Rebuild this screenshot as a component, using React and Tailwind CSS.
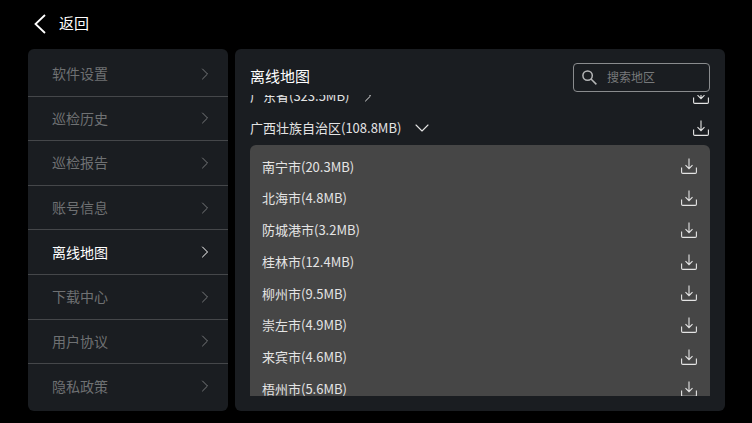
import { ChevronRight, ChevronDown } from 'lucide-react'

const MENU = ['软件设置', '巡检历史', '巡检报告', '账号信息', '离线地图', '下载中心', '用户协议', '隐私政策']
const CITIES = [
  '南宁市(20.3MB)',
  '北海市(4.8MB)',
  '防城港市(3.2MB)',
  '桂林市(12.4MB)',
  '柳州市(9.5MB)',
  '崇左市(4.9MB)',
  '来宾市(4.6MB)',
  '梧州市(5.6MB)',
]

const DownloadIcon = () => (
  <svg width="16" height="16" viewBox="0 0 16 16" fill="none" stroke="#e4e4e4" strokeWidth="1.1" className="shrink-0">
    <path d="M8 0.5V10.5M4.5 7.2L8 10.7L11.5 7.2" />
    <path d="M0.6 9.5V14.2Q0.6 15.4 1.8 15.4H14.2Q15.4 15.4 15.4 14.2V9.5" />
  </svg>
)

const App = () => {
  return (
    <div className="w-[752px] h-[423px] bg-black overflow-hidden text-white font-['Noto_Sans_CJK_SC','Noto_Sans',sans-serif]">
      <div className="h-[49px] flex items-center pl-[34px] pb-[2px]">
        <svg width="12" height="20" viewBox="0 0 12 20" fill="none" stroke="white" strokeWidth="1.8">
          <path d="M11 1L1.5 10L11 19" />
        </svg>
        <span className="ml-[13px] text-[15px]">返回</span>
      </div>

      <div className="flex gap-[7px] pl-[28px]">
        {/* Sidebar */}
        <div className="w-[200px] h-[362px] bg-[#1a1d21] rounded-[6px] pt-[3px] flex flex-col overflow-hidden">
          {MENU.map((item, i) => (
            <div
              key={item}
              className={`h-[44.6px] shrink-0 flex items-center justify-between pl-[24px] pr-[13px] ${i < 7 ? 'border-b border-[#45474a]' : ''}`}
            >
              <span className={`text-[14px] ${item === '离线地图' ? 'text-white' : 'text-[#6f7173]'}`}>{item}</span>
              <ChevronRight size={20} strokeWidth={1.2} className={item === '离线地图' ? 'text-white' : 'text-[#77797b]'} />
            </div>
          ))}
        </div>

        {/* Main panel */}
        <div className="w-[490px] h-[362px] bg-[#1a1d21] rounded-[6px] px-[15px] flex flex-col">
          <div className="h-[46px] shrink-0 flex items-center justify-between pt-[13px] pb-[3px]">
            <span className="text-[15px] -mt-[2px]">离线地图</span>
            <div className="w-[137px] h-[29px] border border-[#8a8c8e] rounded-[4px] flex items-center pl-[8px]">
              <svg width="15" height="15" viewBox="0 0 15 15" fill="none" stroke="#b5b6b7" strokeWidth="1.5">
                <circle cx="5.6" cy="5.6" r="4.7" />
                <path d="M9 9L14.4 14.4" />
              </svg>
              <span className="ml-[10px] text-[12px] text-[#77797b]">搜索地区</span>
            </div>
          </div>

          <div className="h-[301px] overflow-hidden">
            <div className="-mt-[15px]">
              <div className="h-[32px] flex items-center justify-between pr-[1px]">
                <div className="flex items-center text-[13px] text-[#e4e4e4]">
                  广东省(323.5MB)
                  <ChevronRight size={20} strokeWidth={1.2} className="ml-[9px]" />
                </div>
                <DownloadIcon />
              </div>
              <div className="h-[32px] flex items-center justify-between pr-[1px]">
                <div className="flex items-center text-[13px] text-[#e4e4e4]">
                  广西壮族自治区(108.8MB)
                  <ChevronDown size={24} strokeWidth={1.1} className="ml-[9px]" />
                </div>
                <DownloadIcon />
              </div>
              <div className="mt-[1px] bg-[#464646] rounded-t-[6px] pt-[5.6px] pl-[12px] pr-[13px]">
                {CITIES.map((city) => (
                  <div key={city} className="h-[31.75px] flex items-center justify-between text-[13px] text-[#e4e4e4]">
                    <span>{city}</span>
                    <DownloadIcon />
                  </div>
                ))}
              </div>
            </div>
          </div>
        </div>
      </div>
    </div>
  )
}

export default App
